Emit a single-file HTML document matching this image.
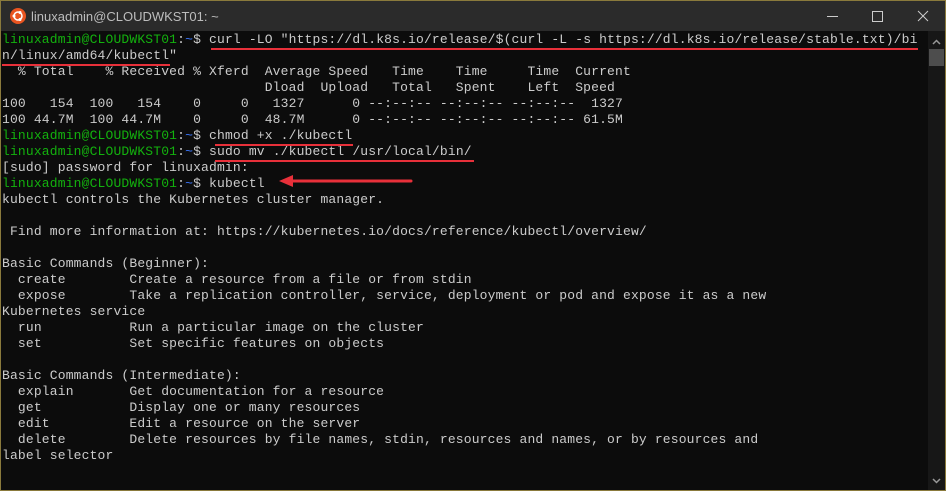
<!DOCTYPE html><html><head><style>
body{margin:0;width:946px;height:491px;overflow:hidden;background:#0c0c0c;}
.win{position:absolute;left:0;top:0;width:944px;height:489px;border:1px solid #8a7a3c;background:#0c0c0c;overflow:hidden}
.tb{position:absolute;left:0;top:0;width:944px;height:30px;background:#2b2b2b;color:#bdbdbd;font:13px "Liberation Sans",sans-serif}
.tb .t{position:absolute;left:30px;top:8px}
.logo{position:absolute;left:9px;top:7px;width:16px;height:16px;border-radius:50%;background:#e95420}
pre{position:absolute;left:1px;top:31px;margin:0;font:13px/16px "Liberation Mono",monospace;letter-spacing:0.16px;color:#cccccc;white-space:pre}
.g{color:#13b10e}.b{color:#3b78ff}
.u{position:absolute;height:2px;background:#e8303a}
.sb{position:absolute;left:927px;top:30px;width:17px;height:459px;background:#171717}
</style></head><body><div class="win">
<div class="tb"><div class="logo"><svg width="16" height="16"><circle cx="8" cy="8" r="4" fill="none" stroke="#fff" stroke-width="1.5"/><circle cx="4" cy="8" r="1.5" fill="#fff"/><circle cx="10" cy="4.5" r="1.5" fill="#fff"/><circle cx="10" cy="11.5" r="1.5" fill="#fff"/></svg></div><span class="t">linuxadmin@CLOUDWKST01: ~</span>
<div style="position:absolute;left:826px;top:15px;width:11px;height:1px;background:#ccc"></div>
<div style="position:absolute;left:871px;top:10px;width:9px;height:9px;border:1px solid #ccc"></div>
<svg style="position:absolute;left:916px;top:9px" width="12" height="12"><path d="M1 1L11 11M11 1L1 11" stroke="#ccc" stroke-width="1"/></svg></div>
<pre><span class="g">linuxadmin@CLOUDWKST01</span>:<span class="b">~</span>$ curl -LO "https://dl.k8s.io/release/$(curl -L -s https://dl.k8s.io/release/stable.txt)/bi
n/linux/amd64/kubectl"
  % Total    % Received % Xferd  Average Speed   Time    Time     Time  Current
                                 Dload  Upload   Total   Spent    Left  Speed
100   154  100   154    0     0   1327      0 --:--:-- --:--:-- --:--:--  1327
100 44.7M  100 44.7M    0     0  48.7M      0 --:--:-- --:--:-- --:--:-- 61.5M
<span class="g">linuxadmin@CLOUDWKST01</span>:<span class="b">~</span>$ chmod +x ./kubectl
<span class="g">linuxadmin@CLOUDWKST01</span>:<span class="b">~</span>$ sudo mv ./kubectl /usr/local/bin/
[sudo] password for linuxadmin:
<span class="g">linuxadmin@CLOUDWKST01</span>:<span class="b">~</span>$ kubectl
kubectl controls the Kubernetes cluster manager.

 Find more information at: https://kubernetes.io/docs/reference/kubectl/overview/

Basic Commands (Beginner):
  create        Create a resource from a file or from stdin
  expose        Take a replication controller, service, deployment or pod and expose it as a new
Kubernetes service
  run           Run a particular image on the cluster
  set           Set specific features on objects

Basic Commands (Intermediate):
  explain       Get documentation for a resource
  get           Display one or many resources
  edit          Edit a resource on the server
  delete        Delete resources by file names, stdin, resources and names, or by resources and
label selector</pre>
<div class="u" style="left:210px;top:47px;width:707px"></div>
<div class="u" style="left:1px;top:63px;width:168px"></div>
<div class="u" style="left:214px;top:143px;width:138px"></div>
<div class="u" style="left:214px;top:159px;width:259px"></div>
<svg style="position:absolute;left:276px;top:172px" width="140" height="16"><path d="M14 8H134" stroke="#e8303a" stroke-width="3" stroke-linecap="round"/><path d="M2 8L16 2V14Z" fill="#e8303a"/></svg>
<div class="sb"><svg style="position:absolute;left:4px;top:8px" width="9" height="6"><path d="M1 5L4.5 1.5L8 5" stroke="#999" stroke-width="1.5" fill="none"/></svg>
<div style="position:absolute;left:1px;top:18px;width:15px;height:17px;background:#4d4d4d"></div>
<svg style="position:absolute;left:4px;top:447px" width="9" height="6"><path d="M1 1L4.5 4.5L8 1" stroke="#999" stroke-width="1.5" fill="none"/></svg></div>
</div></body></html>
